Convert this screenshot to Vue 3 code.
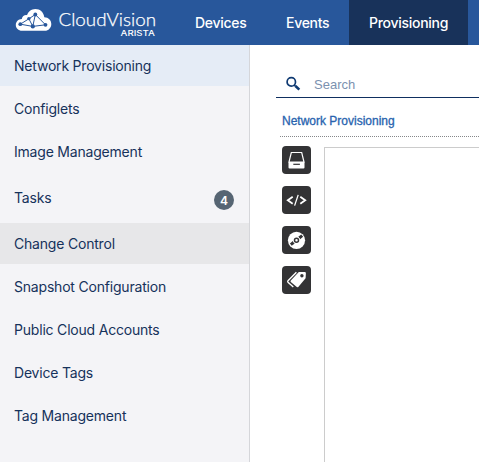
<script setup>
const tabs = [
  { label: 'Devices', width: 91 },
  { label: 'Events', width: 83 },
  { label: 'Provisioning', width: 119, active: true },
]
const menu = [
  { label: 'Network Provisioning', state: 'active' },
  { label: 'Configlets' },
  { label: 'Image Management' },
  { label: 'Tasks', count: 4, state: 'tall' },
  { label: 'Change Control', state: 'hover' },
  { label: 'Snapshot Configuration' },
  { label: 'Public Cloud Accounts' },
  { label: 'Device Tags' },
  { label: 'Tag Management' },
]
</script>

<template>
  <div class="page">
    <header class="topbar">
      <svg class="logo" width="175" height="45" viewBox="0 0 175 45">
        <path d="M22 30.800C18.400 30.800 15.800 28.200 15.800 25C15.800 21.700 18.300 19.200 21.800 19C22.200 16.400 24.600 14.700 27 15.200C28.100 11.700 31.300 8.900 35.300 8.900C40.300 8.900 43.700 12.300 44.300 17.200C48.300 17.100 51.300 20.100 51.300 24C51.300 27.900 48.500 30.800 44.900 30.800Z" fill="#fff" />
        <g fill="none" stroke="#28579b" stroke-width="1">
          <path d="M20.300 24.200L28.900 18.800L35.300 14.500L45.500 24.800L32.800 26.400L20.300 24.200M28.900 18.800L32.800 26.400L35.300 14.500" />
        </g>
        <g fill="#28579b">
          <circle cx="20.300" cy="24.200" r="1.900" /><circle cx="28.900" cy="18.600" r="1.700" />
          <circle cx="35.300" cy="14.500" r="1.900" /><circle cx="45.500" cy="24.800" r="1.900" />
          <circle cx="32.800" cy="26.400" r="2.100" />
        </g>
        <text class="brand" x="58.500" y="25.700" textLength="97.500" lengthAdjust="spacingAndGlyphs">CloudVision</text>
        <text class="company" x="120.500" y="35.800" textLength="34.500" lengthAdjust="spacingAndGlyphs">ARISTA</text>
      </svg>
      <nav class="tabs">
        <a v-for="t in tabs" :key="t.label" class="tab" :class="{ current: t.active }" :style="{ width: t.width + 'px' }">{{ t.label }}</a>
      </nav>
    </header>
    <div class="body">
      <aside class="sidebar">
        <a v-for="m in menu" :key="m.label" class="item" :class="m.state">
          <span>{{ m.label }}</span>
          <span v-if="m.count" class="badge">{{ m.count }}</span>
        </a>
      </aside>
      <main class="main">
        <div class="search">
          <svg width="16" height="16" viewBox="0 0 16 16" fill="none" stroke="#0f3a72">
            <circle cx="6.300" cy="5.900" r="4.200" stroke-width="1.700" />
            <path d="M9 8.800L10.600 10.300" stroke-width="1.600" />
            <path d="M10.500 10L14.300 13.600" stroke-width="2.600" />
          </svg>
          <span>Search</span>
        </div>
        <div class="crumb">Network Provisioning</div>
        <div class="workspace">
          <div class="tools">
            <button class="tool">
              <svg width="29" height="28" viewBox="0 0 29 28">
                <path d="M9.300 6.500H19.700L22 16H7Z" fill="none" stroke="#fff" stroke-width="1.200" />
                <path d="M6.500 16H22.500V21.500Q22.500 22.500 21.500 22.500H7.500Q6.500 22.500 6.500 21.500Z" fill="#fff" />
                <path d="M11.300 17.700H17.900V18.900H11.300Z" fill="#333335" />
              </svg>
            </button>
            <button class="tool">
              <svg width="29" height="28" viewBox="0 0 29 28" fill="none" stroke="#fff">
                <path d="M10.700 10.700L5.800 14.200L10.700 17.700M18.300 10.700L23.200 14.200L18.300 17.700" stroke-width="1.800" />
                <path d="M16.200 8.900L12.600 19.600" stroke-width="1.300" />
              </svg>
            </button>
            <button class="tool">
              <svg width="29" height="28" viewBox="0 0 29 28">
                <circle cx="14.500" cy="14.300" r="8.600" fill="#fff" />
                <path d="M8.800 18.600L11.800 16.300M17.200 12L20.200 9.600" stroke="#333335" stroke-width="3" />
                <circle cx="14.500" cy="14.300" r="3.500" fill="#fff" />
                <circle cx="14.500" cy="14.300" r="2" fill="#fff" stroke="#333335" stroke-width="1.500" />
              </svg>
            </button>
            <button class="tool">
              <svg width="29" height="28" viewBox="0 0 29 28">
                <path d="M14.400 6.300L6 14.800Q5.400 15.500 6 16.200L11.300 21" fill="none" stroke="#fff" stroke-width="1.400" />
                <path d="M16.800 6L22.800 6.100Q23.900 6.200 23.900 7.300L23.600 12.300L16.500 20.700Q15.500 21.700 14.500 20.800L8.800 15.900Q8.100 15.200 8.800 14.400Z" fill="#fff" />
                <circle cx="19.900" cy="9.700" r="1.700" fill="#333335" />
              </svg>
            </button>
          </div>
          <div class="canvas"></div>
        </div>
      </main>
    </div>
  </div>
</template>

<style>
body { margin: 0; overflow: hidden; }
</style>

<style scoped>
.page { display: flex; flex-direction: column; width: 479px; height: 462px; overflow: hidden; background: #fff; font-family: Inter, "Liberation Sans", sans-serif; }
.topbar { display: flex; flex: none; height: 45px; background: #28579b; }
.logo { display: block; flex: none; }
.brand { font: 300 17px Lato, sans-serif; fill: #fff; stroke: #fff; stroke-width: 0.250px; }
.company { font: 500 7px Inter, sans-serif; fill: #fff; }
.tabs { display: flex; }
.tab { box-sizing: border-box; padding-left: 20px; line-height: 46px; height: 45px; color: #fff; font-size: 14px; font-weight: 500; letter-spacing: -0.280px; white-space: nowrap; }
.current { background: #18325a; }
.body { display: flex; flex: 1; min-height: 0; }
.sidebar { box-sizing: border-box; display: flex; flex-direction: column; gap: 2px; width: 250px; flex: none; background: #f4f4f7; border-right: 1px solid #d5d6da; }
.item { box-sizing: border-box; display: flex; align-items: center; justify-content: space-between; flex: none; height: 41px; padding: 1px 15px 0 14px; color: #16325b; font-size: 14px; line-height: 20px; letter-spacing: -0.200px; }
.active { background: #e5ecf6; }
.tall { height: 47px; }
.hover { background: #e7e7e9; }
.badge { width: 20px; height: 20px; margin-top: 4px; border-radius: 50%; background: #566573; color: #fff; text-align: center; font-size: 12px; font-weight: 600; line-height: 21px; letter-spacing: 0; }
.main { display: flex; flex-direction: column; flex: 1; min-width: 0; font-family: "Liberation Sans", sans-serif; }
.search { box-sizing: border-box; display: flex; align-items: center; flex: none; gap: 13px; height: 36px; margin: 17px 0 0 26px; padding: 9px 0 0 9px; border-bottom: 1px solid #0f2f60; color: #7b91af; font-size: 13px; }
.crumb { box-sizing: border-box; flex: none; height: 39px; margin-left: 30px; padding-left: 2px; border-bottom: 1px dotted #85878a; color: #2863ae; font-size: 12px; line-height: 46px; -webkit-text-stroke: 0.300px #2863ae; }
.workspace { display: flex; flex: 1; gap: 13px; padding: 9px 0 0 32px; }
.tools { display: flex; flex-direction: column; gap: 12px; flex: none; }
.tool { width: 29px; height: 28px; padding: 0; border: 0; border-radius: 4px; background: #333335; }
.tool svg { display: block; }
.canvas { flex: 1; margin-top: 1px; border-top: 1px solid #ccc; border-left: 1px solid #ccc; }
</style>
